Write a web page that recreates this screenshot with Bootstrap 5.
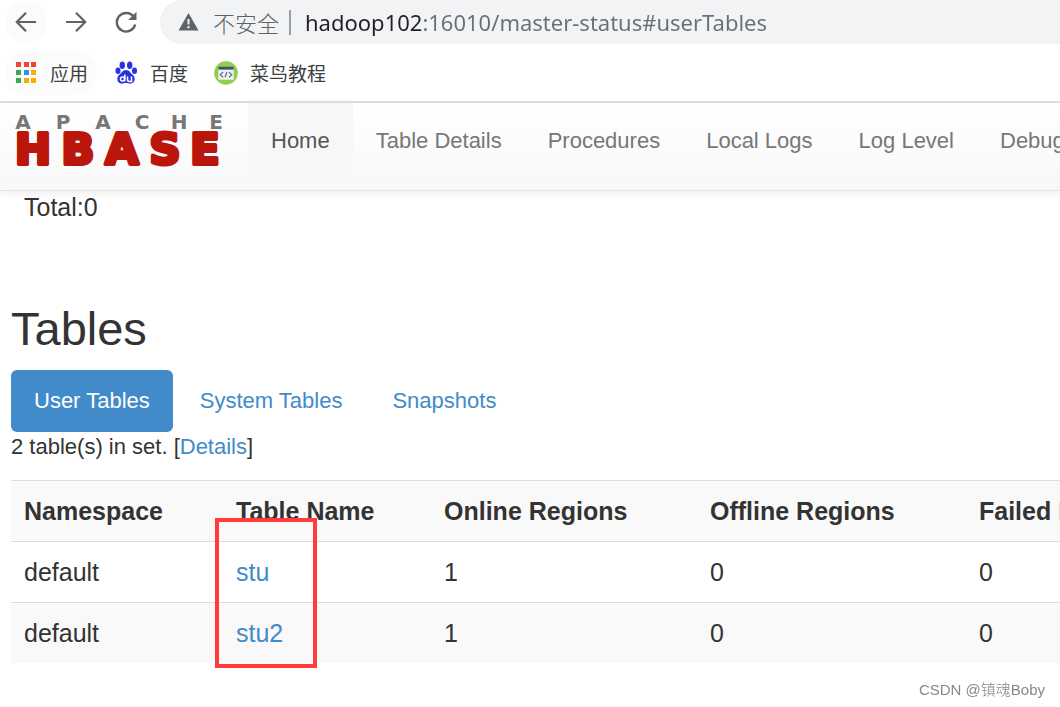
<!DOCTYPE html>
<html lang="zh-CN">
<head>
<meta charset="utf-8">
<meta name="viewport" content="width=device-width, initial-scale=1">
<title>Master: hadoop102</title>
<link href="https://cdn.jsdelivr.net/npm/bootstrap@5.3.0/dist/css/bootstrap.min.css" rel="stylesheet">
<style>
  body { font-family: "Liberation Sans", Arial, sans-serif; font-size: 22px; line-height: 30px; color: #333; background: #fff; }
  a { color: #428bca; text-decoration: none; }
  .browser-ui { font-family: "Noto Sans", "Noto Sans CJK SC", sans-serif; border-bottom: 2px solid #dee1e6; }
  .tool-row { height: 44px; padding-left: 5px; }
  .tool-btn { width: 42px; height: 42px; margin-right: 8px; border-radius: 50%; }
  .tool-btn:first-child { background: #fbfbfb; }
  .address { height: 44px; background: #f1f3f4; border-radius: 22px 0 0 22px; padding-left: 18px; color: #5f6368; margin-left: 5px; }
  .insecure { font-family: "Noto Sans CJK SC", sans-serif; font-weight: 300; margin-left: 14px; }
  .divider { width: 2px; height: 25px; background: #9a9da1; margin: 0 14px 0 10px; }
  .url-box { border: 0; padding: 0; outline: 0; height: 34px; font-size: 22px; color: transparent;
    background: linear-gradient(90deg, #202124 118px, #6b6f73 118px); -webkit-background-clip: text; background-clip: text; }
  .bookmarks { height: 57px; padding-left: 5px; font: 19px/28px "Noto Sans CJK SC", sans-serif; }
  .bookmarks a { color: #3c4043; height: 44px; padding: 0 9px; border-radius: 22px; margin-right: 8px; gap: 12px; }
  .bookmarks a:first-child { background: #fbfbfb; }
  .site-nav { height: 88px; background: linear-gradient(#fff, #f8f8f8); border-bottom: 1px solid #e4e4e4; box-shadow: 0 2px 8px rgba(0,0,0,.08); }
  .site-nav .navbar-nav .nav-link { color: #777; height: 80px; padding: 23px 23px 0; white-space: nowrap; }
  .site-nav .navbar-nav .nav-link.active { color: #555; background: #f7f7f7; }
  .brand { padding: 9px 23px 0 13px; }
  .page-body { padding: 0 0 20px 11px; }
  .total-line { font-size: 25px; padding: 1px 13px 0; }
  h2 { font-size: 47px; line-height: 52px; margin: 81px 0 15px; font-weight: 400; }
  .nav-pills { gap: 4px; }
  .nav-pills .nav-link { color: #428bca; padding: 16px 23px; border-radius: 6px; }
  .nav-pills .nav-link.active { background: #428bca; }
  .set-line { margin: 0 0 18px; }
  .region-table { --bs-table-striped-bg: #f9f9f9; --bs-table-striped-color: #333; width: 1750px; table-layout: fixed; font-size: 25px; line-height: 36px; color: #333; margin: 0; }
  .region-table > :not(caption) > * > * { padding: 12px 13px; border-bottom: 0; border-top: 1px solid #ddd; color: #333; white-space: nowrap; }
  .region-table a { color: #428bca; }
  .highlight-box { left: 204px; top: 38px; width: 102px; height: 150px; border: 4px solid #ff3b3b; pointer-events: none; }
  .watermark { right: 15px; bottom: 5px; font: 300 15px/24px "Liberation Sans", "Noto Sans CJK SC", sans-serif; color: #888; }
</style>
</head>
<body>
<header class="browser-ui">
  <div class="tool-row d-flex align-items-center">
    <button class="tool-btn btn p-0 border-0 d-flex align-items-center justify-content-center flex-shrink-0" aria-label="Back">
      <svg width="22" height="22" viewBox="0 0 22 22" fill="none" stroke="#5f6368" stroke-width="2.2"><path d="M21 11H2M11 1.800 1.800 11 11 20.200"/></svg>
    </button>
    <button class="tool-btn btn p-0 border-0 d-flex align-items-center justify-content-center flex-shrink-0" aria-label="Forward">
      <svg width="22" height="22" viewBox="0 0 22 22" fill="none" stroke="#5f6368" stroke-width="2.2"><path d="M1 11h19M11 1.800 20.200 11 11 20.200"/></svg>
    </button>
    <button class="tool-btn btn p-0 border-0 d-flex align-items-center justify-content-center flex-shrink-0" aria-label="Reload">
      <svg width="22" height="22" viewBox="0 0 22 22" fill="none" stroke="#5f6368" stroke-width="2.400"><path d="M18.500 5.500A9.300 9.300 0 1 0 20.200 13.500"/><path d="M21.500.800V9H13.200z" fill="#5f6368" stroke="none"/></svg>
    </button>
    <div class="address d-flex align-items-center flex-grow-1">
      <svg width="21" height="20" viewBox="0 0 21 20" class="flex-shrink-0"><path d="M10.500 1 20.500 18.500H.500z" fill="#5f6368"/><path d="M10.500 7v5.500M10.500 14v2.200" stroke="#f1f3f4" stroke-width="2"/></svg>
      <label class="insecure text-nowrap" for="url">不安全</label>
      <span class="divider flex-shrink-0"></span>
      <input id="url" class="url-box flex-grow-1" type="text" value="hadoop102:16010/master-status#userTables" spellcheck="false">
    </div>
  </div>
  <nav class="bookmarks d-flex align-items-center" aria-label="Bookmarks">
    <a href="#" class="d-flex align-items-center">
      <svg width="24" height="22" viewBox="0 0 24 22"><g fill="#f44336"><path d="M2 0h5v5H2zM10 0h5v5h-5zM17 0h5v5h-5z"/></g><path d="M2 8h5v5H2zM2 16h5v5H2z" fill="#34a853"/><path d="M10 8h5v5h-5z" fill="#2196f3"/><path d="M17 8h5v5h-5zM10 16h5v5h-5zM17 16h5v5h-5z" fill="#fbab05"/></svg>
      <span>应用</span></a>
    <a href="#" class="d-flex align-items-center">
      <svg width="24" height="24" viewBox="0 0 24 24"><g fill="#2932e1"><ellipse cx="8.300" cy="4.300" rx="2.700" ry="3.700"/><ellipse cx="15.700" cy="4.300" rx="2.700" ry="3.700"/><ellipse cx="4" cy="9.800" rx="2.500" ry="3.300"/><ellipse cx="20.500" cy="9.800" rx="2.500" ry="3.300"/><path d="M12 9c3.500 0 4.500 3 6.500 4.600 3.600 3 2.500 8.600-1.500 9-2 .2-3-.5-5-.5s-3 .7-5 .5c-4-.4-5-6-1.500-9C7.500 12 8.500 9 12 9z"/></g><g fill="none" stroke="#fff" stroke-width="1.500"><circle cx="8.500" cy="18" r="2"/><path d="M10.800 13.500v7M13.500 15.500v3q0 2 2 2h2v-5"/></g></svg>
      <span>百度</span></a>
    <a href="#" class="d-flex align-items-center">
      <svg width="24" height="26" viewBox="0 0 25 26"><circle cx="12.500" cy="13" r="12.300" fill="#92cc50"/><path d="M4.500 7h16v13h-16z" fill="#eef3f5"/><path d="M4.500 6.500h16v3h-16z" fill="#37596b"/><path d="m9.500 12-3 2.800 3 2.700M15.500 12l3 2.800-3 2.700M13.500 12l-2 5.500" fill="none" stroke="#546e7a" stroke-width="1.200"/></svg>
      <span>菜鸟教程</span></a>
  </nav>
</header>

<nav class="site-nav navbar-expand d-flex align-items-start overflow-hidden" aria-label="HBase">
  <a class="brand flex-shrink-0 d-block" href="#">
    <svg class="d-block" width="212" height="68" viewBox="0 0 212 68" role="img" aria-label="Apache HBase" font-family="DejaVu Sans, sans-serif" font-weight="700" text-anchor="middle">
      <text y="17" font-size="20" fill="#777" x="10 50 90 129 166 203">APACHE</text>
      <text y="52" font-size="43" fill="#ba160c" stroke="#ba160c" stroke-width="4" stroke-linejoin="round" x="20 65 109 152 192">HBASE</text>
    </svg>
  </a>
  <ul class="navbar-nav flex-nowrap">
    <li class="nav-item"><a class="nav-link active" aria-current="page" href="#">Home</a></li>
    <li class="nav-item"><a class="nav-link" href="#">Table Details</a></li>
    <li class="nav-item"><a class="nav-link" href="#">Procedures</a></li>
    <li class="nav-item"><a class="nav-link" href="#">Local Logs</a></li>
    <li class="nav-item"><a class="nav-link" href="#">Log Level</a></li>
    <li class="nav-item"><a class="nav-link" href="#">Debug Dump</a></li>
  </ul>
</nav>

<main class="page-body">
  <div class="total-line">Total:0</div>
  <h2>Tables</h2>
  <ul class="nav nav-pills">
    <li class="nav-item"><a class="nav-link active" href="#">User Tables</a></li>
    <li class="nav-item"><a class="nav-link" href="#">System Tables</a></li>
    <li class="nav-item"><a class="nav-link" href="#">Snapshots</a></li>
  </ul>
  <p class="set-line">2 table(s) in set. [<a href="#">Details</a>]</p>
  <div class="position-relative">
    <div class="overflow-hidden">
      <table class="table table-striped region-table">
        <colgroup><col style="width:212px"><col style="width:208px"><col style="width:266px"><col style="width:269px"><col></colgroup>
        <tbody>
          <tr><th scope="col">Namespace</th><th scope="col">Table Name</th><th scope="col">Online Regions</th><th scope="col">Offline Regions</th><th scope="col">Failed Regions</th></tr>
          <tr><td>default</td><td><a href="#">stu</a></td><td>1</td><td>0</td><td>0</td></tr>
          <tr><td>default</td><td><a href="#">stu2</a></td><td>1</td><td>0</td><td>0</td></tr>
        </tbody>
      </table>
    </div>
    <div class="highlight-box position-absolute"></div>
  </div>
</main>
<div class="watermark position-fixed">CSDN @镇魂Boby</div>
<script src="https://cdn.jsdelivr.net/npm/bootstrap@5.3.0/dist/js/bootstrap.bundle.min.js"></script>
</body>
</html>
